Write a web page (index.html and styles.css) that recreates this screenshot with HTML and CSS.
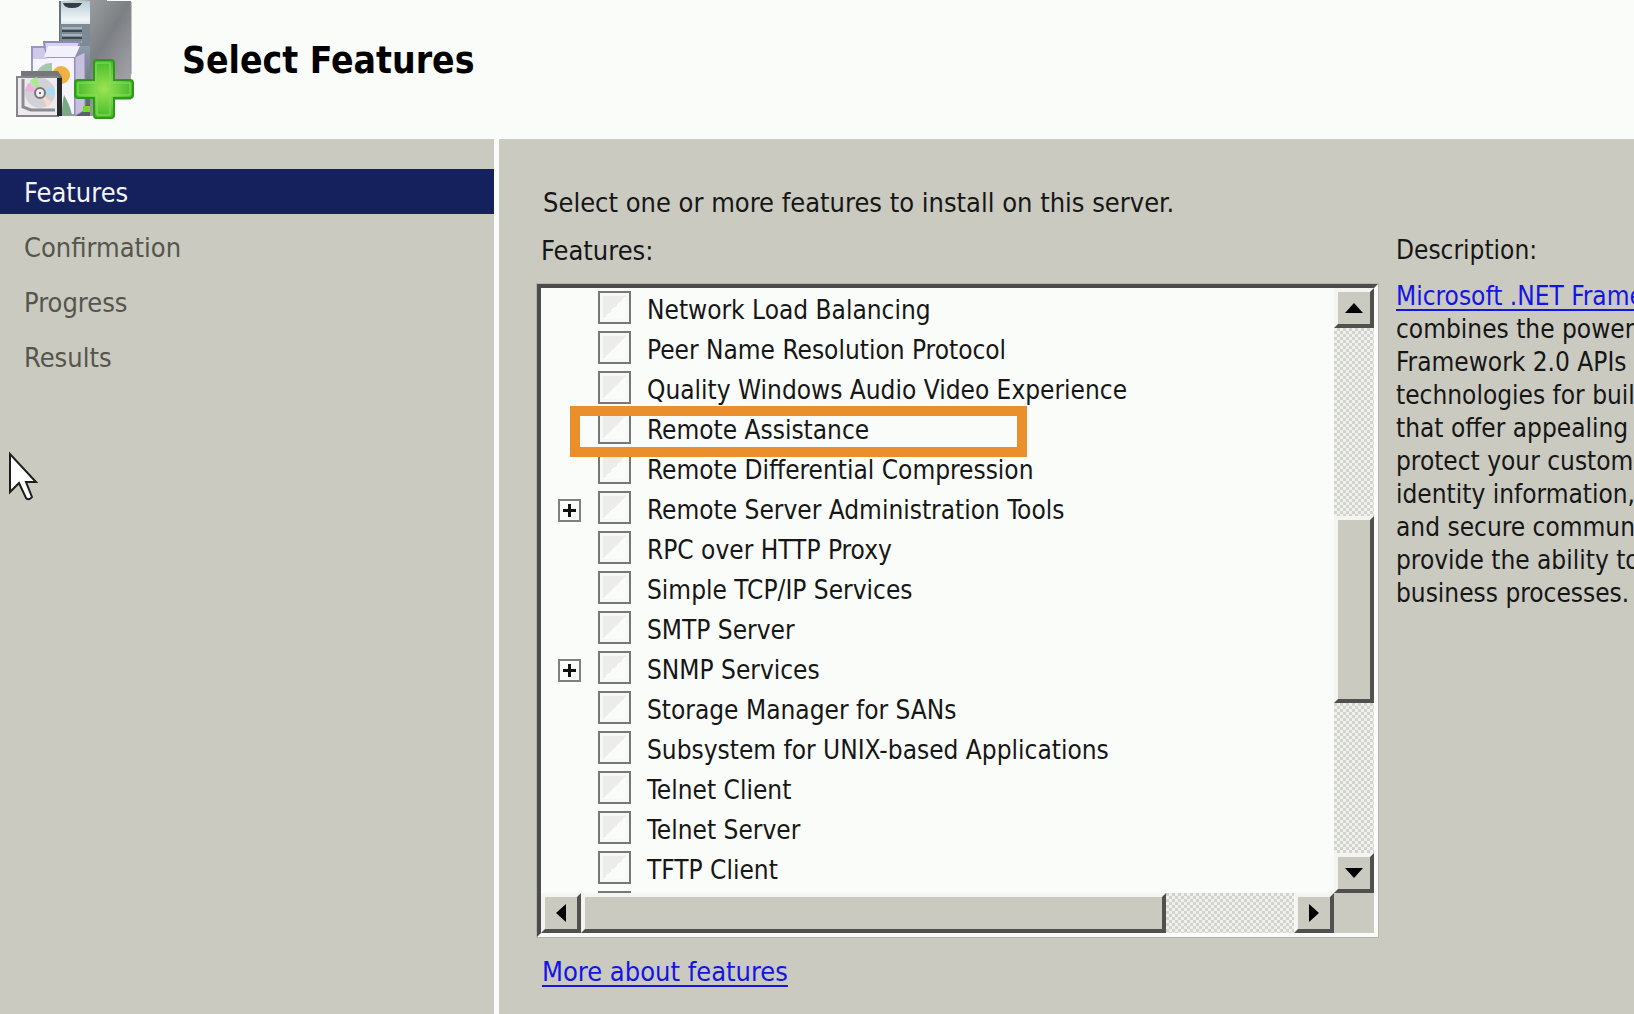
FILE: index.html
```html
<!DOCTYPE html>
<html lang="en">
<head>
    <meta charset="UTF-8">
    <meta name="viewport" content="width=device-width, initial-scale=1.0">
    <link rel="stylesheet" href="styles.css">
    <title>Select Features</title>
</head>
<body>
    <header class="header">
        <svg class="logo" width="120" height="120" viewBox="0 0 120 120" aria-hidden="true">
            <defs>
                <linearGradient id="side" x1="0" y1="0" x2="1" y2="1">
                    <stop offset="0" stop-color="#b0b3b5"/>
                    <stop offset="0.5" stop-color="#7c8083"/>
                    <stop offset="1" stop-color="#b9b4bc"/>
                </linearGradient>
                <linearGradient id="front" x1="0" y1="0" x2="0" y2="1">
                    <stop offset="0" stop-color="#b9cbd5"/>
                    <stop offset="0.16" stop-color="#eef4f7"/>
                    <stop offset="0.4" stop-color="#8b9ba8"/>
                    <stop offset="1" stop-color="#565e68"/>
                </linearGradient>
                <radialGradient id="green">
                    <stop offset="0" stop-color="#9ce455"/>
                    <stop offset="1" stop-color="#45bb28"/>
                </radialGradient>
            </defs>
            <!-- server -->
            <path d="M43 1 74 0h17v1h24v99h-24v16H43z" fill="url(#side)"/>
            <path d="M115 2v72" stroke="#8b8d90" stroke-width="1"/>
            <path d="M43 1h31v115H43z" fill="url(#front)"/>
            <path d="M44 1v44" stroke="#66727c" stroke-width="2"/>
            <path d="M47 3h19q-2 5-10 5t-9-5z" fill="#313d47"/>
            <path d="M44 24h30v22H44z" fill="#7b8a95"/>
            <path d="M46 31h20M46 38h20" stroke="#3c4851" stroke-width="2"/>
            <path d="M46 28h20M46 35h20M46 42h20" stroke="#a6b3bc" stroke-width="2"/>
            <!-- software boxes -->
            <path d="M28 42h36l-5 15H30z" fill="#d7d2ee" stroke="#8f88b8" stroke-width="2"/>
            <path d="M16 47h13v10h30v58H34l-18-2z" fill="#f5f3fb" stroke="#9c96c2" stroke-width="2"/>
            <path d="M17 48h11l3 11H17z" fill="#cfc9ea"/>
            <path d="M59 57 69 52v58l-10 6z" fill="#c5c0dc" stroke="#8f88b8"/>
            <path d="M32 46h32l-5 11H28z" fill="#f2f0fa"/>
            <path d="M19 75q6-13 17-12v12z" fill="#a5c7ac"/>
            <circle cx="45" cy="75" r="9" fill="#efb140"/>
            <path d="M46 115q0-12 2-20 6 10 8 20z" fill="#77aa81"/>
            <path d="M67 106h7v6h-7z" fill="#76d82c"/>
            <!-- disc case -->
            <path d="M5 71h37l4 6v39H42L5 80z" fill="#77777a"/>
            <path d="M1 77h41v39H1z" fill="#edebf0" stroke="#858489" stroke-width="2"/>
            <path d="M41 78h5v38h-5z" fill="#29292a"/>
            <path d="M7 79v28l8 3h24" fill="none" stroke="#8b8b90" stroke-width="3"/>
            <circle cx="24" cy="93" r="15" fill="#d2d1d7"/>
            <path d="M24 93 14 80l7-3z" fill="#a5eb8a"/>
            <path d="M24 93 9 91l3-8z" fill="#edb1dd"/>
            <path d="m24 93 14-7 1 9z" fill="#a9dcf3"/>
            <path d="m24 93 12 9-5 5z" fill="#f4dac7"/>
            <circle cx="24" cy="93" r="5" fill="#eee" stroke="#77777b" stroke-width="2"/>
            <circle cx="24" cy="93" r="1" fill="#444"/>
            <!-- green plus -->
            <path d="M80 60h15q3 0 3 3v17h16q3 0 3 3v12q0 3-3 3H98v17q0 3-3 3H80q-2 0-2-3V98H62q-3 0-3-3V83q0-3 3-3h16V63q0-3 2-3z" fill="url(#green)" stroke="#2e981e" stroke-width="2"/>
            <path d="M80 63h14v20h20v12H94v20H81V95H62V83h18z" fill="none" stroke="#8cdc63" stroke-width="1"/>
        </svg>
        <h1 class="title">Select Features</h1>
    </header>

    <div class="content">
        <nav class="steps">
            <a href="#" class="step active">Features</a>
            <a href="#" class="step">Confirmation</a>
            <a href="#" class="step">Progress</a>
            <a href="#" class="step">Results</a>
            <svg class="cursor" width="32" height="54" viewBox="0 0 32 54" aria-hidden="true">
                <path d="M3 4v38l9-9 7 15q3 3 6-1l-6-15h10z" fill="#fff" stroke="#1c1c1c" stroke-width="2"/>
            </svg>
        </nav>

        <main class="main">
            <p class="intro">Select one or more features to install on this server.</p>

            <section class="features">
                <h2 class="label">Features:</h2>
                <div class="listbox">
                    <ul class="list">
                        <li class="row"><label><input type="checkbox">Network Load Balancing</label></li>
                        <li class="row"><label><input type="checkbox">Peer Name Resolution Protocol</label></li>
                        <li class="row"><label><input type="checkbox">Quality Windows Audio Video Experience</label></li>
                        <li class="row marked"><label><input type="checkbox">Remote Assistance</label></li>
                        <li class="row"><label><input type="checkbox">Remote Differential Compression</label></li>
                        <li class="row"><button type="button" class="expand" aria-label="Expand"></button><label><input type="checkbox">Remote Server Administration Tools</label></li>
                        <li class="row"><label><input type="checkbox">RPC over HTTP Proxy</label></li>
                        <li class="row"><label><input type="checkbox">Simple TCP/IP Services</label></li>
                        <li class="row"><label><input type="checkbox">SMTP Server</label></li>
                        <li class="row"><button type="button" class="expand" aria-label="Expand"></button><label><input type="checkbox">SNMP Services</label></li>
                        <li class="row"><label><input type="checkbox">Storage Manager for SANs</label></li>
                        <li class="row"><label><input type="checkbox">Subsystem for UNIX-based Applications</label></li>
                        <li class="row"><label><input type="checkbox">Telnet Client</label></li>
                        <li class="row"><label><input type="checkbox">Telnet Server</label></li>
                        <li class="row"><label><input type="checkbox">TFTP Client</label></li>
                        <li class="row"><label><input type="checkbox" aria-label="Next feature"></label></li>
                    </ul>
                    <div class="scroll vertical">
                        <button type="button" class="arrow" aria-label="Scroll up"><svg width="18" height="10" viewBox="0 0 18 10"><path d="M9 0l9 10H0z"/></svg></button>
                        <div class="track"><div class="thumb"></div></div>
                        <button type="button" class="arrow" aria-label="Scroll down"><svg width="18" height="10" viewBox="0 0 18 10"><path d="M0 0h18L9 10z"/></svg></button>
                    </div>
                    <div class="scroll horizontal">
                        <button type="button" class="arrow" aria-label="Scroll left"><svg width="10" height="18" viewBox="0 0 10 18"><path d="M10 0v18L0 9z"/></svg></button>
                        <div class="track"><div class="thumb"></div></div>
                        <button type="button" class="arrow" aria-label="Scroll right"><svg width="10" height="18" viewBox="0 0 10 18"><path d="M0 0l10 9-10 9z"/></svg></button>
                    </div>
                </div>
                <a href="#" class="more">More about features</a>
            </section>

            <section class="description">
                <h2 class="label">Description:</h2>
                <p class="text">
                    <a href="#">Microsoft .NET Framework</a><br>
                    combines the power<br>
                    Framework 2.0 APIs<br>
                    technologies for building<br>
                    that offer appealing<br>
                    protect your customers<br>
                    identity information,<br>
                    and secure communication<br>
                    provide the ability to<br>
                    business processes.
                </p>
            </section>
        </main>
    </div>
</body>
</html>
```
FILE: styles.css
```css
* {
    box-sizing: border-box;
}

body {
    margin: 0;
    min-height: 100vh;
    display: flex;
    flex-direction: column;
    overflow: hidden;
    background-color: #cacac1;
    color: #161616;
    font-family: Tahoma, "DejaVu Sans Condensed", "Noto Sans", sans-serif;
    font-size: 27px;
    line-height: 33px;
}

h1, h2, p, ul {
    margin: 0;
    padding: 0;
}

a {
    color: #1414e6;
    text-decoration-thickness: 2px;
    text-underline-offset: 4px;
}

button {
    padding: 0;
    cursor: pointer;
}

.header {
    display: flex;
    gap: 46px;
    height: 139px;
    padding-left: 16px;
    background-color: #fafcf9;
}

.title {
    padding-top: 40px;
    color: #000;
    font-size: 37px;
    line-height: 42px;
}

.content {
    display: flex;
    flex: 1;
}

/* left column */
.steps {
    position: relative;
    display: flex;
    flex-direction: column;
    gap: 10px;
    flex: 0 0 499px;
    padding-top: 30px;
    border-right: 5px solid #fafcf9;
}

.step {
    padding: 7px 24px 5px;
    color: #55554d;
    text-decoration: none;
}

.step.active {
    background-color: #14215c;
    color: #f4f5f7;
}

.cursor {
    position: absolute;
    left: 7px;
    top: 311px;
}

/* right side */
.main {
    display: grid;
    grid-template-columns: minmax(0, 1fr) 238px;
    column-gap: 18px;
    align-content: start;
    flex: 1;
    min-width: 0;
    padding: 47px 0 0 38px;
}

.intro {
    grid-column: 1 / 3;
    padding-left: 6px;
    margin-bottom: 15px;
}

.label {
    margin-bottom: 17px;
    padding-left: 4px;
    font-size: 27px;
    font-weight: normal;
}

.listbox {
    display: grid;
    grid-template-columns: minmax(0, 1fr) 40px;
    grid-template-rows: 605px 40px;
    margin-bottom: 18px;
    border: 4px solid;
    border-color: #4c4c4c #fafcf9 #fafcf9 #4c4c4c;
    outline: 1px solid #b4b4ac;
}

.list {
    overflow: hidden;
    background-color: #fafcf9;
    font-size: 26px;
    line-height: 38px;
    list-style: none;
}

.row {
    position: relative;
    display: flex;
    height: 40px;
    padding: 3px 0 0 57px;
}

.row label {
    display: flex;
    gap: 16px;
}

.row input {
    appearance: none;
    width: 33px;
    height: 33px;
    margin: 0;
    border: 2px solid #777774;
    background: linear-gradient(135deg, #ececea 50%, #fafcf9 50%);
    box-shadow: inset 0 0 0 3px #f7f8f6;
}

.marked::after {
    content: "";
    position: absolute;
    z-index: 1;
    top: -2px;
    left: 29px;
    box-sizing: border-box;
    width: 457px;
    height: 51px;
    border: 10px solid #ea8f2c;
}

.expand {
    width: 23px;
    height: 23px;
    margin: 8px 17px 0 -40px;
    border: 2px solid #80807d;
    background:
        linear-gradient(#111, #111) center / 13px 3px no-repeat,
        linear-gradient(#111, #111) center / 3px 13px no-repeat,
        #fafcf9;
}

/* scroll bars */
.scroll {
    display: flex;
}

.vertical {
    flex-direction: column;
}

.arrow, .thumb {
    border: 4px solid;
    border-color: #f4f5f1 #50504e #50504e #f4f5f1;
    background-color: #cacac1;
}

.arrow {
    display: flex;
    align-items: center;
    justify-content: center;
    flex: 0 0 40px;
}

.track {
    display: flex;
    flex: 1;
    background: conic-gradient(#d2d3cc 25%, #f0f1ed 0 50%, #d2d3cc 0 75%, #f0f1ed 0) 0 0 / 6px 6px;
}

.vertical .track {
    flex-direction: column;
    padding-top: 188px;
}

.vertical .thumb {
    height: 187px;
}

.horizontal .thumb {
    width: 82%;
}

.more {
    margin-left: 5px;
}

.description {
    min-width: 0;
    overflow: hidden;
    font-size: 26px;
    white-space: nowrap;
}

.description .label {
    margin-bottom: 13px;
    padding: 0;
    font-size: 26px;
}
```
